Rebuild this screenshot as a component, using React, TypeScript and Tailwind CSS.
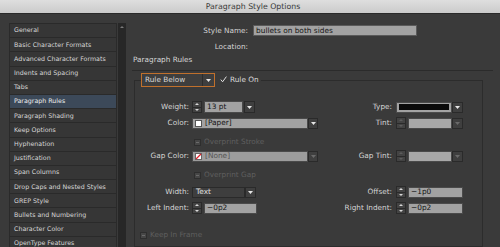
import React from "react";

const items = [
  "General",
  "Basic Character Formats",
  "Advanced Character Formats",
  "Indents and Spacing",
  "Tabs",
  "Paragraph Rules",
  "Paragraph Shading",
  "Keep Options",
  "Hyphenation",
  "Justification",
  "Span Columns",
  "Drop Caps and Nested Styles",
  "GREP Style",
  "Bullets and Numbering",
  "Character Color",
  "OpenType Features",
];

function Tri({ dim }: { dim?: boolean }) {
  return (
    <svg width="5" height="3" viewBox="0 0 5 3">
      <path d="M0 0H5L2.5 3Z" fill={dim ? "#6a6a6a" : "#e6e6e6"} />
    </svg>
  );
}

function ArrowBtn({ dim, w }: { dim?: boolean; w: string }) {
  return (
    <div className={`${w} h-full flex items-center justify-center bg-[#3f3f3f] border border-[#2a2a2a]`}>
      <Tri dim={dim} />
    </div>
  );
}

function Spinner({ dim }: { dim?: boolean }) {
  const c = dim ? "#5c5c5c" : "#d8d8d8";
  return (
    <div className="w-[10px] h-[12px] flex flex-col border border-[#2a2a2a] bg-[#434343]">
      <div className="flex-1 flex items-center justify-center border-b border-[#2a2a2a]">
        <svg width="4" height="2" viewBox="0 0 4 2">
          <path d="M0 2H4L2 0Z" fill={c} />
        </svg>
      </div>
      <div className="flex-1 flex items-center justify-center">
        <svg width="4" height="2" viewBox="0 0 4 2">
          <path d="M0 0H4L2 2Z" fill={c} />
        </svg>
      </div>
    </div>
  );
}

function Label({ children, w }: { children: React.ReactNode; w: string }) {
  return <div className={`${w} text-right text-[#d4d4d4] text-[7.3px] leading-none whitespace-nowrap`}>{children}</div>;
}

function Check({ label, className }: { label: string; className: string }) {
  return (
    <div className={`flex items-center h-full ${className}`}>
      <div className="w-[7px] h-[7px] bg-[#464646] border border-[#2e2e2e] flex items-center justify-center">
        <div className="w-[3px] h-px bg-[#6a6a6a]" />
      </div>
      <span className="ml-[3px] text-[7.3px] leading-none text-[#5f5f5f]">{label}</span>
    </div>
  );
}

export default function App() {
  return (
    <div className="w-[500px] h-[247px] overflow-hidden bg-[#3a3a3a] font-['DejaVu_Sans',sans-serif] flex flex-col">
      {/* title bar */}
      <div className="h-[14px] shrink-0 bg-gradient-to-b from-[#dedede] to-[#cbcbcb] border-b border-[#2a2a2a] flex items-center justify-center pl-[6px]">
        <span className="text-[7.8px] leading-none text-[#3a3a3a]">Paragraph Style Options</span>
      </div>
      <div className="flex flex-1 min-h-0">
        {/* left list */}
        <div className="w-[126px] shrink-0 pl-[9px] pt-[9px] flex">
          <div className="w-[108px] border-l border-t border-[#2a2a2a] flex flex-col">
            {items.map((t) => (
              <div
                key={t}
                className={`h-[14.2px] shrink-0 border-b border-r border-[#2a2a2a] flex items-center pl-[4px] text-[6.3px] leading-none whitespace-nowrap overflow-hidden ${
                  t === "Paragraph Rules" ? "bg-[#3c4959] text-[#eeeeee]" : "bg-[#363636] text-[#d6d6d6]"
                }`}
              >
                {t}
              </div>
            ))}
          </div>
          <div className="w-[8px] ml-px bg-[#272727] flex justify-center pt-[3px]">
            <svg width="4" height="2" viewBox="0 0 4 2">
              <path d="M0 2H4L2 0Z" fill="#7a7a7a" />
            </svg>
          </div>
        </div>

        {/* right panel */}
        <div className="flex-1 ml-[6px] pr-[7px] flex flex-col">
          <div className="mt-[11px] h-[11px] flex items-center">
            <Label w="w-[116px]">Style Name:</Label>
            <div className="ml-[5px] w-[164px] h-[11px] bg-[#a2a2a2] border border-[#5a5a5a] flex items-center pl-[2px] text-[7.4px] leading-none text-[#141414]">
              bullets on both sides
            </div>
          </div>
          <div className="mt-[5px] h-[11px] flex items-center">
            <Label w="w-[116px]">Location:</Label>
          </div>
          <div className="mt-[2px] h-[11px] flex items-center pl-px text-[7.3px] leading-none text-[#d6d6d6]">
            Paragraph Rules
          </div>
          <div className="mt-[5px] h-px bg-[#2b2b2b]" />

          <fieldset className="mt-[2px] ml-[2px] mr-[10px] border border-[#2c2c2c] pl-[6px] flex-1">
            <legend>
              <div className="flex items-center h-[14px]">
                <div className="w-[74px] h-[14px] border border-[#c0702c] bg-[#3e3e3e] flex items-center">
                  <span className="flex-1 pl-[3px] text-[7.3px] leading-none text-[#dadada]">Rule Below</span>
                  <div className="w-[12px] h-full border-l border-[#2c2c2c] flex items-center justify-center">
                    <Tri />
                  </div>
                </div>
                <div className="ml-[5px] flex items-center pr-[2px]">
                  <svg width="7" height="7" viewBox="0 0 7 7">
                    <path d="M0.8 3.6L2.6 5.8L6.4 0.6" fill="none" stroke="#e0e0e0" strokeWidth="1" />
                  </svg>
                  <span className="ml-[3px] text-[7.3px] leading-none text-[#dadada]">Rule On</span>
                </div>
              </div>
            </legend>

            {/* Weight / Type */}
            <div className="mt-[13px] h-[14px] flex items-center">
              <div className="w-[199px] flex items-center h-full">
                <Label w="w-[48px]">Weight:</Label>
                <div className="ml-[3px] flex items-center h-[12px]">
                  <Spinner />
                  <div className="ml-[2px] w-[39px] h-[12px] bg-[#a2a2a2] border border-[#4a4a4a] flex items-center pl-[2px] text-[7.4px] leading-none text-[#141414]">
                    13 pt
                  </div>
                  <div className="ml-px h-[12px] flex">
                    <ArrowBtn w="w-[11px]" />
                  </div>
                </div>
              </div>
              <div className="flex items-center h-full">
                <Label w="w-[52px]">Type:</Label>
                <div className="ml-[4px] flex items-center h-[11px]">
                  <div className="w-[56px] h-[11px] bg-[#a2a2a2] border border-[#4a4a4a] flex items-center px-[2px]">
                    <div className="w-full h-[6px] bg-[#0a0a0a]" />
                  </div>
                  <ArrowBtn w="w-[11px]" />
                </div>
              </div>
            </div>

            {/* Color / Tint */}
            <div className="mt-[2px] h-[14px] flex items-center">
              <div className="w-[199px] flex items-center h-full">
                <Label w="w-[48px]">Color:</Label>
                <div className="ml-[3px] flex items-center h-[11px]">
                  <div className="w-[116px] h-[11px] bg-[#a2a2a2] border border-[#4a4a4a] flex items-center pl-[2px]">
                    <div className="w-[7px] h-[7px] bg-white border border-[#555]" />
                    <span className="ml-[3px] text-[7.4px] leading-none text-[#141414]">[Paper]</span>
                  </div>
                  <ArrowBtn w="w-[10px]" />
                </div>
              </div>
              <div className="flex items-center h-full">
                <Label w="w-[52px]">Tint:</Label>
                <div className="ml-[4px] flex items-center h-[11px]">
                  <Spinner dim />
                  <div className="ml-[2px] w-[44px] h-[11px] bg-[#a8a8a8] border border-[#4a4a4a]" />
                  <ArrowBtn w="w-[11px]" dim />
                </div>
              </div>
            </div>

            {/* Overprint Stroke */}
            <div className="mt-[5px] h-[14px] flex items-center">
              <Check label="Overprint Stroke" className="ml-[53px]" />
            </div>

            {/* Gap Color / Gap Tint */}
            <div className="h-[14px] flex items-center">
              <div className="w-[199px] flex items-center h-full">
                <Label w="w-[48px]">Gap Color:</Label>
                <div className="ml-[3px] flex items-center h-[11px]">
                  <div className="w-[116px] h-[11px] bg-[#9c9c9c] border border-[#4a4a4a] flex items-center pl-[2px]">
                    <svg width="7" height="7" viewBox="0 0 7 7">
                      <rect x="0.5" y="0.5" width="6" height="6" fill="#fff" stroke="#666" strokeWidth="1" />
                      <path d="M1 6L6 1" stroke="#e0202a" strokeWidth="1.3" />
                    </svg>
                    <span className="ml-[3px] text-[7.4px] leading-none text-[#555]">[None]</span>
                  </div>
                  <ArrowBtn w="w-[10px]" dim />
                </div>
              </div>
              <div className="flex items-center h-full">
                <Label w="w-[52px]">Gap Tint:</Label>
                <div className="ml-[4px] flex items-center h-[11px]">
                  <Spinner dim />
                  <div className="ml-[2px] w-[44px] h-[11px] bg-[#a8a8a8] border border-[#4a4a4a]" />
                  <ArrowBtn w="w-[11px]" dim />
                </div>
              </div>
            </div>

            {/* Overprint Gap */}
            <div className="mt-[5px] h-[14px] flex items-center">
              <Check label="Overprint Gap" className="ml-[53px]" />
            </div>

            {/* Width / Offset */}
            <div className="mt-[3px] h-[14px] flex items-center">
              <div className="w-[199px] flex items-center h-full">
                <Label w="w-[48px]">Width:</Label>
                <div className="ml-[3px] flex items-center h-[11px]">
                  <div className="w-[53px] h-[11px] bg-[#3e3e3e] border border-[#2a2a2a] flex items-center pl-[3px] text-[7.4px] leading-none text-[#e0e0e0]">
                    Text
                  </div>
                  <ArrowBtn w="w-[11px]" />
                </div>
              </div>
              <div className="flex items-center h-full">
                <Label w="w-[52px]">Offset:</Label>
                <div className="ml-[4px] flex items-center h-[12px]">
                  <Spinner />
                  <div className="ml-[2px] w-[55px] h-[11px] bg-[#a2a2a2] border border-[#4a4a4a] flex items-center pl-[2px] text-[7.4px] leading-none text-[#141414]">
                    −1p0
                  </div>
                </div>
              </div>
            </div>

            {/* Left / Right Indent */}
            <div className="mt-[2px] h-[14px] flex items-center">
              <div className="w-[199px] flex items-center h-full">
                <Label w="w-[48px]">Left Indent:</Label>
                <div className="ml-[3px] flex items-center h-[12px]">
                  <Spinner />
                  <div className="ml-[2px] w-[53px] h-[11px] bg-[#a2a2a2] border border-[#4a4a4a] flex items-center pl-[2px] text-[7.4px] leading-none text-[#141414]">
                    −0p2
                  </div>
                </div>
              </div>
              <div className="flex items-center h-full">
                <Label w="w-[52px]">Right Indent:</Label>
                <div className="ml-[4px] flex items-center h-[12px]">
                  <Spinner />
                  <div className="ml-[2px] w-[55px] h-[11px] bg-[#a2a2a2] border border-[#4a4a4a] flex items-center pl-[2px] text-[7.4px] leading-none text-[#141414]">
                    −0p2
                  </div>
                </div>
              </div>
            </div>

            {/* Keep In Frame */}
            <div className="mt-[13px] h-[14px] flex items-center">
              <Check label="Keep In Frame" className="-ml-px" />
            </div>
          </fieldset>
        </div>
      </div>
    </div>
  );
}
